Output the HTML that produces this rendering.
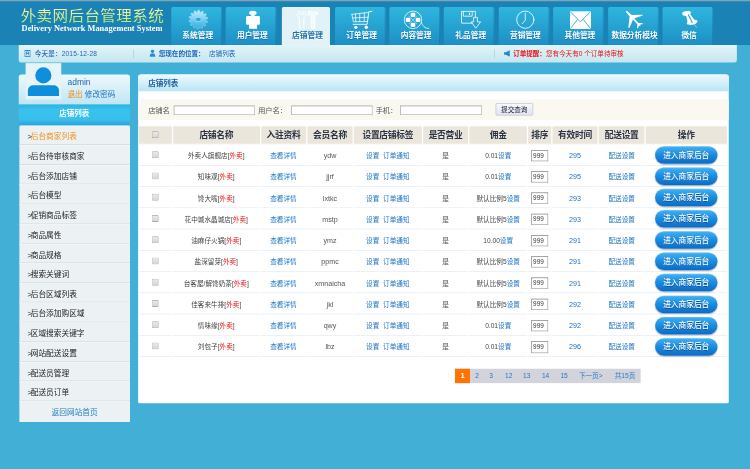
<!DOCTYPE html>
<html lang="zh-CN">
<head>
<meta charset="utf-8">
<title>外卖网后台管理系统</title>
<style>
*{box-sizing:border-box;margin:0;padding:0}
html,body{width:750px;height:469px;overflow:hidden;background:#42b0d6}
body{font-family:"Liberation Sans","Noto Sans CJK SC",sans-serif;}
#stage{position:absolute;left:0;top:0;width:1200px;height:751px;transform:scale(0.625);transform-origin:0 0;background:#42b0d6;font-size:12px;color:#333;overflow:hidden}
a{color:#1a72c4;text-decoration:none}
/* header */
#hd{position:absolute;left:0;top:0;width:1200px;height:72px;background:#1a82b4}
#hd .topline{position:absolute;left:0;top:0;width:100%;height:1.6px;background:#7da4b8}
#logo{position:absolute;left:33px;top:9px;font-size:24.9px;line-height:30px;white-space:nowrap;letter-spacing:0.62px;transform:scaleY(0.92);transform-origin:0 26px;background:linear-gradient(#f4f6a4 18%,#b4ec78 88%);-webkit-background-clip:text;background-clip:text;color:transparent;-webkit-text-fill-color:transparent}
#sub{position:absolute;left:34.5px;top:36px;color:#fff;font:bold 13.4px/18px "Liberation Serif",serif;white-space:nowrap;letter-spacing:0.035px}
.tab{position:absolute;top:10.6px;width:81px;height:61.4px;box-shadow:inset -1.6px 0 0 rgba(10,80,130,.28);background:linear-gradient(#2fb6de,#1d8fc6);border-radius:2.5px 2.5px 0 0;color:#fff;text-align:center;font-weight:bold;font-size:12.3px;text-shadow:0 1px 1px rgba(10,80,130,.55)}
.tab span{position:absolute;left:4.6px;right:0;top:38.2px;line-height:16px;white-space:nowrap}
.tab.on{box-shadow:none;background:#e1f3f9;color:#2272ab;width:76.7px;text-shadow:0 1px 0 #fff}
/* info bar */
#info{position:absolute;left:30px;top:72px;width:1149px;height:28.2px;background:linear-gradient(#e2f4f9,#c5e7f0);border-radius:0 0 4px 4px;font-size:10.5px;line-height:27px;color:#1d62b8}
#info .i{position:absolute;top:0;white-space:nowrap}
#info .sep{position:absolute;top:7px;width:1px;height:14px;background:#9fcbdc}
/* sidebar */
#side{position:absolute;left:30px;top:119px;width:178px;height:556px}
#user{position:absolute;left:0;top:0;width:178px;height:48.5px;background:linear-gradient(#ecf8fc,#bfe6f3);border-radius:4px 4px 0 0}
#avatar{position:absolute;left:11px;top:-18px;width:57px;height:57.5px;background:#e6f4fa}
#stitle{position:absolute;left:0;top:48.2px;width:178px;height:32.8px;background:linear-gradient(#2db1e2,#39c2ef 28%,#38c0ed 72%,#2ba3d9);color:#fff;font-weight:bold;text-align:center;line-height:31px;font-size:12px}
#menu{position:absolute;left:1px;top:81.7px;width:177px;background:#ecf1f3;border-radius:3px 3px 0 0}
#menu div{height:31.5px;line-height:35px;font-size:12.3px;border-bottom:1px solid #c9d6d8;border-top:1px solid #f6f9fa;padding-left:13px;overflow:hidden;color:#222;white-space:nowrap}
#menu u{text-decoration:none;margin-right:-2px}
#menu div.home{text-align:center;padding-left:0;color:#1b7fc4;border-bottom:0;height:33px}
/* main */
#main{position:absolute;left:221px;top:119px;width:945px;height:526px;background:#fff;border-radius:4px 4px 2px 2px}
#mtitle{position:absolute;left:0;top:0;width:945px;height:27.4px;background:linear-gradient(#eefaff,#b9e4f4);border-radius:4px 4px 0 0;color:#1a5fa0;font-weight:bold;line-height:28.5px;padding-left:16px;font-size:12px}
#search{position:absolute;left:0;top:40px;width:945px;height:32.5px;background:#fbf8f2;font-size:11.6px;line-height:33px;color:#555}
#search span,#search i{position:absolute;top:0;white-space:nowrap;font-style:normal}
#search i{top:9.5px;height:15.5px;background:#fff;border:1px solid #b0b0b0;border-top-color:#888;border-left-color:#999}
#search b{position:absolute;top:6px;height:20.3px;border:1px solid #b4bccb;background:linear-gradient(#f7f9fc,#dfe5ef);border-radius:2px;font-weight:normal;line-height:18.5px;text-align:center;font-size:10.6px;color:#223}
table{position:absolute;left:-0.8px;top:80.5px;width:944.6px;border-collapse:separate;border-spacing:2.2px;table-layout:fixed}
th{color:#2a3346;height:29.2px;padding-bottom:1px;border-bottom:0.7px solid #fff;background:#ebe6dc;font-size:14px;font-weight:bold;text-align:center;white-space:nowrap;letter-spacing:-0.5px}
td{height:32.05px;padding-top:1.2px;line-height:14px;text-align:center;font-size:10.6px;border-bottom:1px solid #dfe9f1;white-space:nowrap;color:#444;vertical-align:middle}
td .r{color:#f01818}
.cb{display:inline-block;position:relative;top:-2.8px;width:10.5px;height:11px;border:1px solid #9c9c9c;border-top-color:#8a8a8a;border-bottom-color:#868686;border-radius:1.5px;background:linear-gradient(#e9e9e9,#d6d6d6);vertical-align:middle}
th .cb{top:-1.2px}
.ord{display:inline-block;width:27px;height:18.6px;border:1px solid #9a9a9a;border-top-color:#6e6e6e;border-left-color:#7a7a7a;background:#fff;font-size:10.2px;line-height:16.5px;text-align:left;padding-left:2px;color:#333;vertical-align:middle}
.btn{display:inline-block;position:relative;top:-0.6px;vertical-align:middle;width:100px;height:28px;border-radius:14px;background:linear-gradient(#43b2f1,#1c8fe2 45%,#0a6cc4);color:#fff;font-size:12.3px;font-weight:500;line-height:28.6px;text-shadow:0 1px 1px rgba(0,40,100,.6);box-shadow:0 1.5px 2px rgba(0,30,70,.4),inset 0 1px 0 rgba(255,255,255,.25)}
#pager{position:absolute;left:507px;top:471px;height:23px;font-size:12px;line-height:23px;white-space:nowrap;background:#d3d3dc;color:#2a78c2;width:297px}
#pager span{position:absolute;top:0}
#pager .p{transform:translateX(-50%);font-size:10.6px}
#pager .cur{left:0;width:24px;background:#ff7400;color:#fff;text-align:center;font-weight:bold}
.en{font-size:11.4px;color:#555}
td a.en{color:#1b6fb8}
</style>
</head>
<body>
<div id="stage">
 <div id="hd">
  <div class="topline"></div>
  <div id="logo">外卖网后台管理系统</div>
  <div id="sub">Delivery Network Management System</div>
  <div class="tab" style="left:273.6px"><span>系统管理</span></div>
  <div class="tab" style="left:361.0px"><span>用户管理</span></div>
  <div class="tab on" style="left:451.3px"><span>店铺管理</span></div>
  <div class="tab" style="left:535.7px"><span>订单管理</span></div>
  <div class="tab" style="left:623.0px"><span>内容管理</span></div>
  <div class="tab" style="left:710.4px"><span>礼品管理</span></div>
  <div class="tab" style="left:797.8px"><span>营销管理</span></div>
  <div class="tab" style="left:885.1px"><span>其他管理</span></div>
  <div class="tab" style="left:972.5px"><span>数据分析模块</span></div>
  <div class="tab" style="left:1059.8px"><span>微信</span></div>
<!--ICONS-->
<svg id="icons" viewBox="0 0 750 45" width="1200" height="72" style="position:absolute;left:0;top:0;overflow:visible" fill="none" stroke="none">
<defs><linearGradient id="gg" x1="0" y1="0" x2="0" y2="1"><stop offset="0" stop-color="#c9eefa"/><stop offset="0.55" stop-color="#6ccaee"/><stop offset="1" stop-color="#2ba8dc"/></linearGradient></defs>
<path d="M197.45,12.05 L198.17,10.10 L199.36,10.16 L199.89,12.17 L200.81,12.43 L202.31,10.99 L203.35,11.56 L202.96,13.59 L203.67,14.23 L205.65,13.58 L206.34,14.55 L205.10,16.21 L205.47,17.09 L207.53,17.36 L207.74,18.54 L205.90,19.50 L205.85,20.45 L207.59,21.59 L207.27,22.74 L205.19,22.81 L204.74,23.64 L205.81,25.42 L205.02,26.32 L203.12,25.48 L202.34,26.04 L202.54,28.10 L201.44,28.57 L200.09,26.99 L199.15,27.15 L198.43,29.10 L197.24,29.04 L196.71,27.03 L195.79,26.77 L194.29,28.21 L193.25,27.64 L193.64,25.61 L192.93,24.97 L190.95,25.62 L190.26,24.65 L191.50,22.99 L191.13,22.11 L189.07,21.84 L188.86,20.66 L190.70,19.70 L190.75,18.75 L189.01,17.61 L189.33,16.46 L191.41,16.39 L191.86,15.56 L190.79,13.78 L191.58,12.88 L193.48,13.72 L194.26,13.16 L194.06,11.10 L195.16,10.63 L196.51,12.21Z" fill="url(#gg)" stroke="#b5e6f7" stroke-width="0.5" stroke-opacity="0.8"/>
<ellipse cx="198.3" cy="19.4" rx="3" ry="2.1" fill="#2aa7da" stroke="#c4ecf9" stroke-width="0.6"/>
<g fill="#fff"><ellipse cx="252.9" cy="12.9" rx="3.8" ry="2.1"/><rect x="251.2" y="14.4" width="3.4" height="2.4"/><rect x="246.1" y="16" width="13.8" height="8.8" rx="1.3"/><rect x="249.1" y="24" width="8" height="4.8"/></g>
<g stroke="#fff" stroke-width="0.9" stroke-linejoin="round"><path d="M300,11.2 L300,14.2 L303.2,14.2 L303.2,11.2 C305.2,11.8 306.2,13.4 305.8,15.2 C305.4,16.6 304.4,17 303.8,17.8 L303.8,28.4 L302.4,27.2 L301,28.4 L299.4,28.4 L299.4,17.8 C298.4,17 297.4,16.4 297.3,14.8 C297.2,13.2 298.2,11.8 300,11.2Z"/><path d="M308.2,11.6 L310,11.4 L313,12 L317.8,12.4 L317.8,14.4 L314.8,14.8 L314.8,28.4 L311.2,28.4 L311.2,14.8 L308.2,14.8Z" fill="#fff" fill-opacity="0.55"/></g>
<g stroke="#fff" stroke-width="0.75" stroke-linecap="round"><path d="M371.9,11.3 L368.9,11.6 L367.1,24.3 L353.2,24.3" stroke-width="0.9"/><path d="M351.9,14.3 L368.6,12.5 M351.9,14.3 L353.4,21.8 L367.4,21.5 M352.6,18 L368,17.2 M355.5,14 L355.8,21.7 M359.7,13.5 L359.7,21.7 M364.4,13 L364.2,21.6"/></g><circle cx="355.8" cy="27.3" r="1.6" fill="#fff"/><circle cx="366.3" cy="27.3" r="1.75" fill="#fff"/>
<g><circle cx="413" cy="19.85" r="8.7" stroke="#fff" stroke-width="0.75"/><path d="M409,15.8 L417,23.9 M417,15.8 L409,23.9" stroke="#fff" stroke-width="0.6" stroke-opacity="0.7"/><g fill="#fff"><rect x="410.7" y="12.7" width="4.6" height="4.4" rx="1.3"/><rect x="410.7" y="22.7" width="4.6" height="4.4" rx="1.3"/><rect x="405.8" y="17.65" width="4.6" height="4.4" rx="1.3"/><rect x="415.7" y="17.65" width="4.6" height="4.4" rx="1.3"/></g><path d="M421.4,22.5 C422.6,25.5 424.4,28.6 428.8,28.4" stroke="#fff" stroke-width="0.75" stroke-linecap="round"/></g>
<g stroke="#fff" stroke-width="0.8" stroke-linejoin="miter"><path d="M472.6,23.2 L461.5,23.2 L461.5,11.4 L475.4,11.4 L475.4,17"/><path d="M463.4,11.4 L463.4,16.2 L472.2,16.2 L472.2,11.4"/><path d="M473.6,17.4 L477.4,17.4 L477.4,21.9 L480.6,21.9 L475.8,28.2 L471.2,21.9 L473.6,21.9Z"/></g><rect x="468.9" y="12.7" width="1.2" height="2.3" fill="#fff"/>
<g stroke="#fff" stroke-width="0.85" stroke-linecap="round"><circle cx="525.3" cy="19.7" r="8.6"/><path d="M525.3,13.2 L525.3,20.2 L522.3,23.6" stroke-width="0.8"/></g>
<g><rect x="570" y="11.3" width="21" height="17.7" fill="#fff"/><path d="M570.4,11.7 L580.3,21.8 L590.6,11.7 M570.4,28.7 L577.6,19.4 M590.6,28.7 L583.2,19.4" stroke="#2ba6da" stroke-width="0.85"/></g>
<path d="M626.1,11.0 L627.3,10.9 L631.6,14.9 L641.9,14.7 L642.9,15.5 L634.3,18.3 L638.4,22.9 L642.3,23.0 L642.9,23.9 L639.9,24.8 L640.6,25.4 L640.0,26.0 L638.9,25.6 L638.0,28.4 L637.0,28.0 L637.3,24.2 L633.0,19.6 L629.4,27.9 L628.3,27.6 L629.6,16.5 L625.9,12.0Z" fill="#fff"/>
<g><path d="M682.2,13.4 C682.4,11.6 685.6,10.9 688.6,11 C690.6,11.1 691.2,12.2 690.8,13.2 L690.2,14.2 L694.4,19.8 C696.4,19.6 697.8,20.6 697.6,21.6 C697.2,23.2 694.8,24.2 693.8,24.4 L692.4,24.8 C690.6,25 688,25 687,24 C686.6,23.2 686.8,22.4 687.6,21.8 L686.2,16 L683.4,15.4 C682.6,15 682.1,14.2 682.2,13.4Z" fill="#fff"/><path d="M688.2,14.6 L692.4,23" stroke="#2aa6da" stroke-width="1.1"/><path d="M694,24 L696.8,27.8" stroke="#dff3fa" stroke-width="0.5"/></g>
</svg>
<!--/ICONS-->
 </div>
 <div id="info">
  <svg style="position:absolute;left:9px;top:8px" width="10" height="11" viewBox="0 0 10 11"><rect x="0.8" y="0.8" width="8.4" height="9.4" fill="#f4fbfe" stroke="#1f8fe0" stroke-width="1.6"/><path d="M3.2,3 L6.8,3 M3.6,3 L3.6,8.4 M6.4,3 L6.4,8.4 M3.2,5.6 L6.8,5.6" stroke="#1a5a9c" stroke-width="1" fill="none"/></svg>
  <span class="i" style="left:25.5px;letter-spacing:0.3px"><span style="font-weight:500">今天是：</span>2015-12-28</span>
  <span class="sep" style="left:183px"></span>
  <svg style="position:absolute;left:209px;top:7px" width="10" height="12" viewBox="0 0 10 12"><circle cx="5" cy="3" r="2.7" fill="#2a8bd6"/><path d="M0.3,11.6 C0.3,7.4 2.4,6.2 5,6.2 C7.6,6.2 9.7,7.4 9.7,11.6Z" fill="#2a8bd6"/></svg>
  <span class="i" style="left:224px;font-weight:bold">您现在的位置：<span style="font-weight:normal;margin-left:7px">店铺列表</span></span>
  <span class="sep" style="left:761px"></span>
  <svg style="position:absolute;left:776px;top:8px" width="11" height="11" viewBox="0 0 11 11"><path d="M0.5,3.4 L3.6,3.4 L9.6,0.2 L9.6,10.8 L3.6,7.6 L0.5,7.6Z" fill="#1e86dc"/></svg>
  <span class="i" style="left:791px;color:#f20c14;font-weight:bold">订单提醒：<span style="font-weight:normal">您有今天有0 个订单待审核</span></span>
 </div>
 <div id="side">
  <div id="user">
   <div id="avatar"><svg width="57" height="58" viewBox="0 0 35 36" style="position:absolute;left:0;top:0"><circle cx="17.4" cy="12.2" r="8" fill="#0d8fdc"/><path d="M2,32.6 L2,27.5 C2,24 4.5,22 8,22 L27,22 C30.5,22 33,24 33,27.5 L33,32.6Z" fill="#0d8fdc"/></svg></div>
   <div style="position:absolute;left:78px;top:5px;color:#2a66b0;font-size:13.5px;line-height:16px">admin</div>
   <div style="position:absolute;left:78px;top:24px;font-size:12.2px;line-height:16px;white-space:nowrap"><span style="color:#f28a1c">退出</span> <span style="color:#1d6fc0">修改密码</span></div>
  </div>
  <div id="stitle">店铺列表</div>
  <div id="menu">
   <div><u>&gt;</u><span style="color:#f5901e">后台商家列表</span></div>
   <div><u>&gt;</u>后台待审核商家</div>
   <div><u>&gt;</u>后台添加店铺</div>
   <div><u>&gt;</u>后台模型</div>
   <div><u>&gt;</u>促销商品标签</div>
   <div><u>&gt;</u>商品属性</div>
   <div><u>&gt;</u>商品规格</div>
   <div><u>&gt;</u>搜索关键词</div>
   <div><u>&gt;</u>后台区域列表</div>
   <div><u>&gt;</u>后台添加购区域</div>
   <div><u>&gt;</u>区域搜索关键字</div>
   <div><u>&gt;</u>网站配送设置</div>
   <div><u>&gt;</u>配送员管理</div>
   <div><u>&gt;</u>配送员订单</div>
   <div class="home">返回网站首页</div>
  </div>
 </div>
 <div id="main">
  <div id="mtitle">店铺列表</div>
  <div id="search">
   <span style="left:16px">店铺名</span><i style="left:57px;width:130px"></i>
   <span style="left:192px">用户名：</span><i style="left:244.6px;width:130px"></i>
   <span style="left:380px">手机：</span><i style="left:419.4px;width:131px"></i>
   <b style="left:571.5px;width:60.6px">提交查询</b>
  </div>
  <table>
   <colgroup><col style="width:52.2px"><col style="width:138.6px"><col style="width:72px"><col style="width:72.4px"><col style="width:108.2px"><col style="width:72px"><col style="width:92.2px"><col style="width:36.2px"><col style="width:72.4px"><col style="width:72.7px"><col style="width:129.3px"></colgroup>
   <tr><th><span class="cb"></span></th><th>店铺名称</th><th>入驻资料</th><th>会员名称</th><th>设置店铺标签</th><th>是否营业</th><th>佣金</th><th>排序</th><th>有效时间</th><th>配送设置</th><th>操作</th></tr>
   <tr><td><span class="cb"></span></td><td>外卖人旗舰店[<span class="r">外卖</span>]</td><td><a>查看详情</a></td><td class="en">ydw</td><td><a>设置</a>&nbsp; <a>订单通知</a></td><td>是</td><td>0.01<a>设置</a></td><td><span class="ord">999</span></td><td><a class="en">295</a></td><td><a>配送设置</a></td><td><span class="btn">进入商家后台</span></td></tr>
   <tr><td><span class="cb"></span></td><td>知味观[<span class="r">外卖</span>]</td><td><a>查看详情</a></td><td class="en">jjrf</td><td><a>设置</a>&nbsp; <a>订单通知</a></td><td>是</td><td>0.01<a>设置</a></td><td><span class="ord">999</span></td><td><a class="en">295</a></td><td><a>配送设置</a></td><td><span class="btn">进入商家后台</span></td></tr>
   <tr><td><span class="cb"></span></td><td>馋大嘴[<span class="r">外卖</span>]</td><td><a>查看详情</a></td><td class="en">lxtkc</td><td><a>设置</a>&nbsp; <a>订单通知</a></td><td>是</td><td>默认比例5<a>设置</a></td><td><span class="ord">999</span></td><td><a class="en">293</a></td><td><a>配送设置</a></td><td><span class="btn">进入商家后台</span></td></tr>
   <tr><td><span class="cb"></span></td><td>花中城水晶城店[<span class="r">外卖</span>]</td><td><a>查看详情</a></td><td class="en">mstp</td><td><a>设置</a>&nbsp; <a>订单通知</a></td><td>是</td><td>默认比例5<a>设置</a></td><td><span class="ord">999</span></td><td><a class="en">293</a></td><td><a>配送设置</a></td><td><span class="btn">进入商家后台</span></td></tr>
   <tr><td><span class="cb"></span></td><td>油麻仔火锅[<span class="r">外卖</span>]</td><td><a>查看详情</a></td><td class="en">ymz</td><td><a>设置</a>&nbsp; <a>订单通知</a></td><td>是</td><td>10.00<a>设置</a></td><td><span class="ord">999</span></td><td><a class="en">291</a></td><td><a>配送设置</a></td><td><span class="btn">进入商家后台</span></td></tr>
   <tr><td><span class="cb"></span></td><td>盐深留芽[<span class="r">外卖</span>]</td><td><a>查看详情</a></td><td class="en">ppmc</td><td><a>设置</a>&nbsp; <a>订单通知</a></td><td>是</td><td>默认比例5<a>设置</a></td><td><span class="ord">999</span></td><td><a class="en">291</a></td><td><a>配送设置</a></td><td><span class="btn">进入商家后台</span></td></tr>
   <tr><td><span class="cb"></span></td><td>台客屋/解馋奶茶[<span class="r">外卖</span>]</td><td><a>查看详情</a></td><td class="en">xmnaicha</td><td><a>设置</a>&nbsp; <a>订单通知</a></td><td>是</td><td>默认比例5<a>设置</a></td><td><span class="ord">999</span></td><td><a class="en">291</a></td><td><a>配送设置</a></td><td><span class="btn">进入商家后台</span></td></tr>
   <tr><td><span class="cb"></span></td><td>佳客来牛排[<span class="r">外卖</span>]</td><td><a>查看详情</a></td><td class="en">jkl</td><td><a>设置</a>&nbsp; <a>订单通知</a></td><td>是</td><td>默认比例5<a>设置</a></td><td><span class="ord">999</span></td><td><a class="en">292</a></td><td><a>配送设置</a></td><td><span class="btn">进入商家后台</span></td></tr>
   <tr><td><span class="cb"></span></td><td>情味缘[<span class="r">外卖</span>]</td><td><a>查看详情</a></td><td class="en">qwy</td><td><a>设置</a>&nbsp; <a>订单通知</a></td><td>是</td><td>0.01<a>设置</a></td><td><span class="ord">999</span></td><td><a class="en">292</a></td><td><a>配送设置</a></td><td><span class="btn">进入商家后台</span></td></tr>
   <tr><td><span class="cb"></span></td><td>刘包子[<span class="r">外卖</span>]</td><td><a>查看详情</a></td><td class="en">lbz</td><td><a>设置</a>&nbsp; <a>订单通知</a></td><td>是</td><td>0.01<a>设置</a></td><td><span class="ord">999</span></td><td><a class="en">296</a></td><td><a>配送设置</a></td><td><span class="btn">进入商家后台</span></td></tr>
  </table>
  <div id="pager"><span class="cur">1</span><span class="p" style="left:35.2px">2</span><span class="p" style="left:57.7px">3</span><span class="p" style="left:85.9px">12</span><span class="p" style="left:114.8px">13</span><span class="p" style="left:145px">14</span><span class="p" style="left:174.6px">15</span><span class="p" style="left:217.2px">下一页&gt;</span><span class="p" style="left:272.1px">共15页</span></div>
 </div>
</div>
</body>
</html>
